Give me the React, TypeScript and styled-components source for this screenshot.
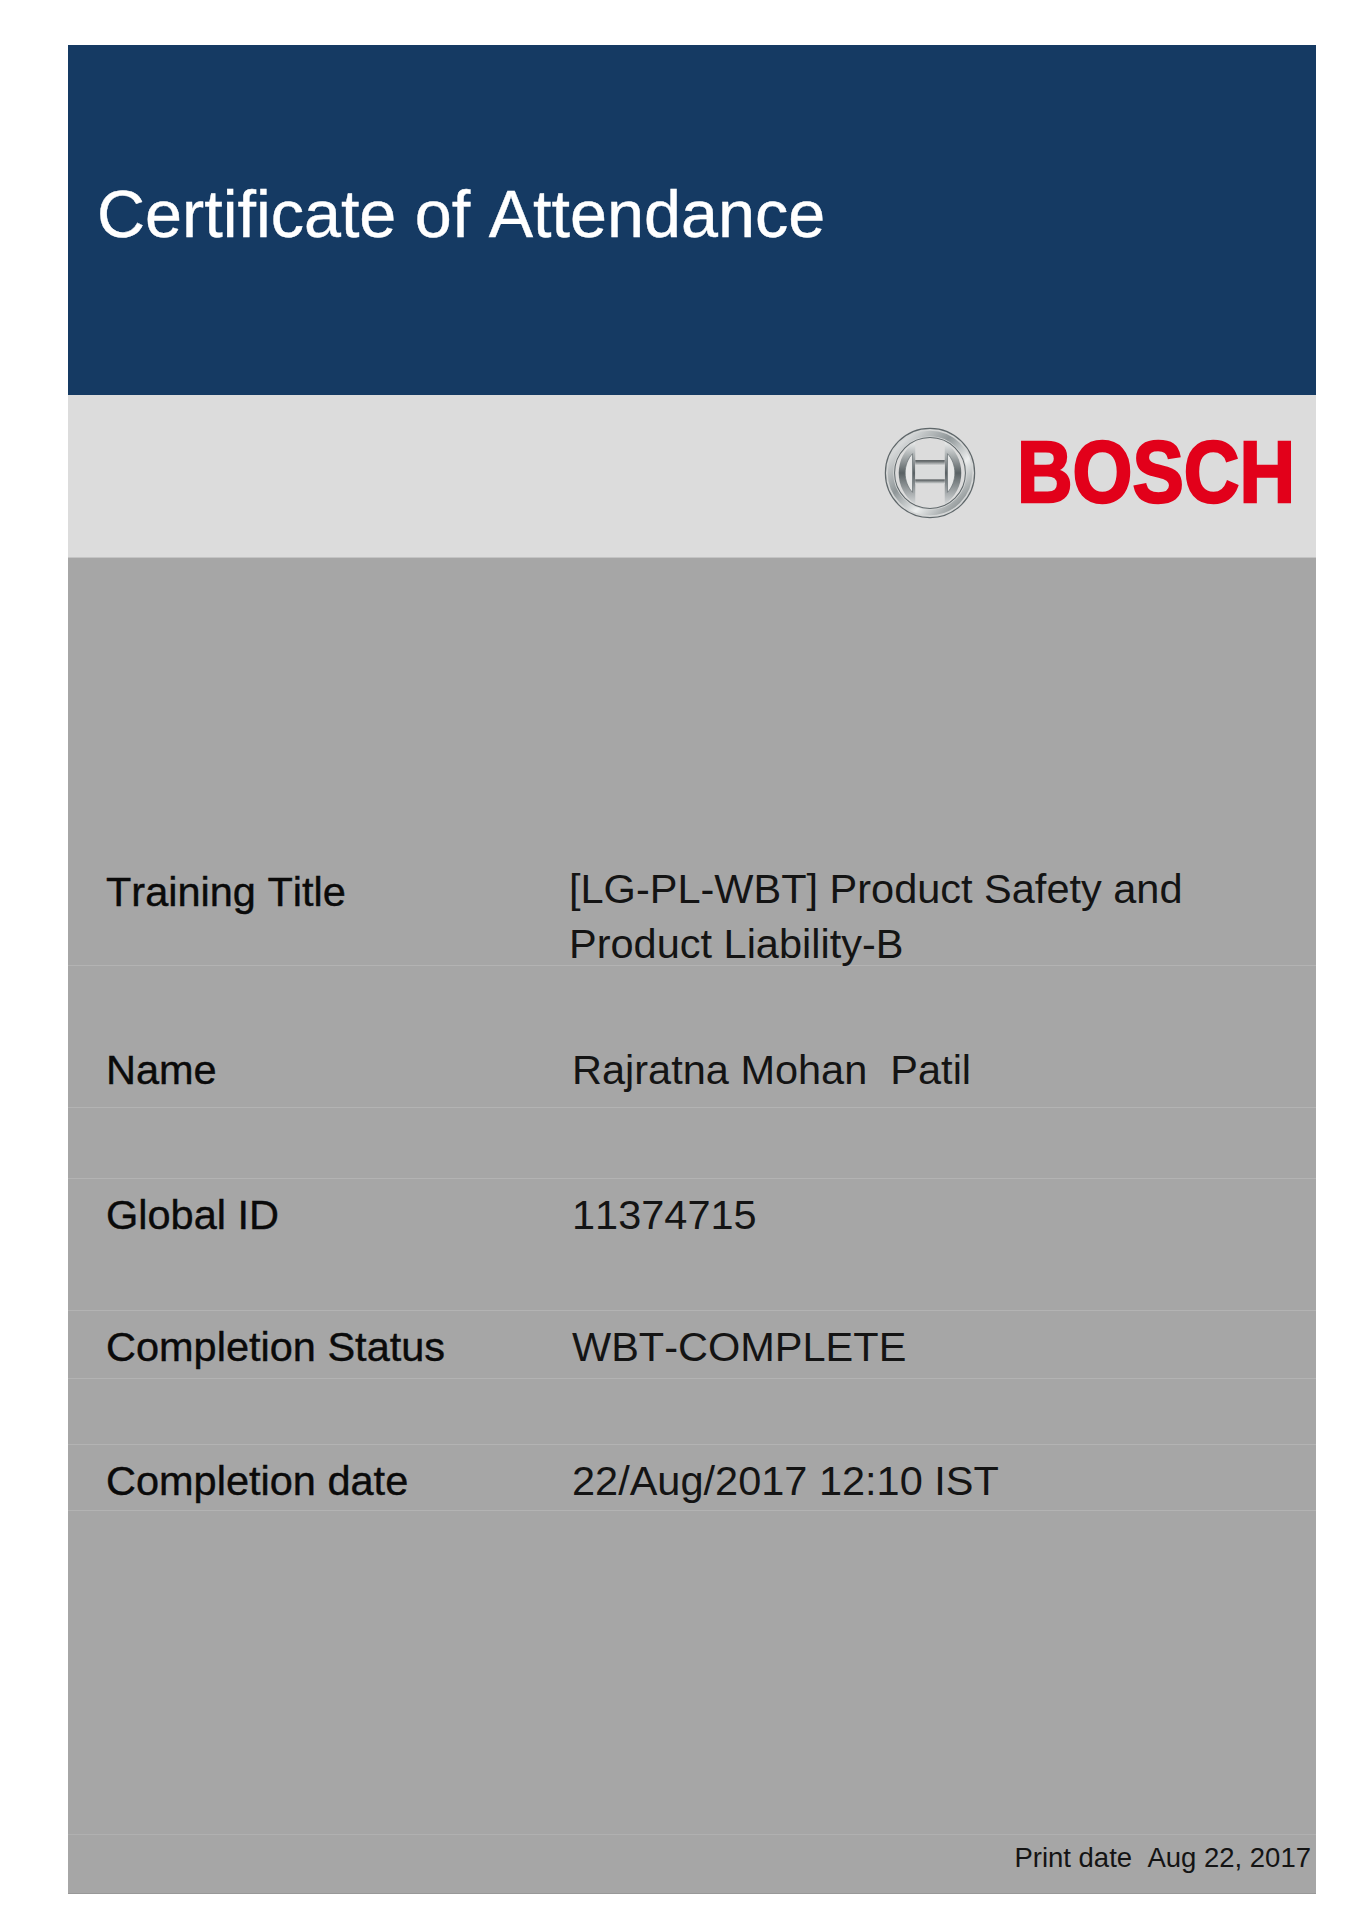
import React from 'react'
import styled, { createGlobalStyle } from 'styled-components'

const GlobalStyle = createGlobalStyle`
  html, body {
    margin: 0;
    padding: 0;
    background: #fff;
    font-family: "Liberation Sans", Arial, sans-serif;
    font-kerning: none;
  }
`

const Page = styled.div`
  width: 1364px;
  height: 1929px;
  padding: 45px 48px 0 68px;
  box-sizing: border-box;
`

const Banner = styled.header`
  height: 350px;
  background: #153a63;
  padding: 132px 0 0 29px;
  box-sizing: border-box;
`

const Heading = styled.h1`
  margin: 0;
  font-size: 66.5px;
  line-height: 74px;
  font-weight: 400;
  color: #fff;
  -webkit-text-stroke: 0.4px #fff;
`

const LogoBar = styled.div`
  height: 163px;
  background: #dcdcdc;
  border-bottom: 1px solid #c4c4c4;
  box-sizing: border-box;
  display: flex;
  align-items: flex-start;
  padding: 31px 25px 0 0;
  justify-content: flex-end;
`

const Armature = styled.svg`
  width: 92px;
  height: 94px;
  margin-right: 41px;
  flex: none;
`

const Wordmark = styled.div`
  width: 274px;
  height: 92px;
  font-weight: 700;
  font-size: 87px;
  line-height: 92px;
  color: #e2001a;
  -webkit-text-stroke: 2.5px #e2001a;
  white-space: nowrap;
  transform: scaleX(0.885);
  transform-origin: left center;
`

const Body = styled.main`
  height: 1336px;
  background: #a6a6a6;
  box-sizing: border-box;
  padding-top: 290px;
  border-bottom: 1px solid #989898;
`

const Row = styled.div<{ $height: number; $pad: number; $gap?: number; $top?: boolean }>`
  display: grid;
  grid-template-columns: 466px 1fr;
  align-items: start;
  height: ${({ $height }) => $height}px;
  margin-top: ${({ $gap }) => $gap ?? 0}px;
  padding: ${({ $pad }) => $pad}px 0 0 38px;
  box-sizing: border-box;
  border-bottom: 1px solid #b3b3b3;
  border-top: ${({ $top }) => ($top ? '1px solid #b3b3b3' : 'none')};
`

const Label = styled.div<{ $drop?: number }>`
  font-size: 41.5px;
  line-height: 55px;
  color: #0a0a0a;
  margin-top: ${({ $drop }) => $drop ?? 0}px;
  -webkit-text-stroke: 0.4px #0a0a0a;
`

const Value = styled.div<{ $shift?: number }>`
  font-size: 41.5px;
  line-height: 55px;
  color: #141414;
  margin-left: ${({ $shift }) => $shift ?? 0}px;
`

const PrintRow = styled.div`
  margin-top: 323px;
  height: 60px;
  border-top: 1px solid #b0b0b0;
  box-sizing: border-box;
  padding: 3px 5px 0 0;
  text-align: right;
  font-size: 27.5px;
  line-height: 40px;
  color: #141414;
`

function BoschArmature() {
  return (
    <Armature viewBox="0 0 100 100">
      <defs>
        <linearGradient id="ring" x1="0" y1="0" x2="1" y2="1">
          <stop offset="0" stopColor="#fafafa" />
          <stop offset="0.4" stopColor="#8f9698" />
          <stop offset="0.65" stopColor="#eceeee" />
          <stop offset="1" stopColor="#687072" />
        </linearGradient>
        <linearGradient id="arc" x1="0" y1="0" x2="0" y2="1">
          <stop offset="0" stopColor="#eceeee" />
          <stop offset="0.5" stopColor="#596164" />
          <stop offset="1" stopColor="#d4d7d8" />
        </linearGradient>
        <linearGradient id="bar" x1="0" y1="0" x2="0" y2="1">
          <stop offset="0" stopColor="#474e50" />
          <stop offset="1" stopColor="#e4e6e6" />
        </linearGradient>
      </defs>
      <circle cx="50" cy="50" r="48.5" fill="#d4d6d6" stroke="#5f676a" strokeWidth="1.3" />
      <circle cx="50" cy="50" r="43" fill="none" stroke="url(#ring)" strokeWidth="6" />
      <circle cx="50" cy="50" r="38.5" fill="#dcdcdc" stroke="#5f676a" strokeWidth="1.1" />
      <path d="M34 16 C22 24 16 37 16 50 C16 63 22 76 34 84 Z" fill="url(#arc)" />
      <path d="M66 16 C78 24 84 37 84 50 C84 63 78 76 66 84 Z" fill="url(#arc)" />
      <path d="M31 29 C26 34 23 42 23 50 C23 58 26 66 31 71 Z" fill="#e6e7e7" stroke="#6b7275" strokeWidth="0.8" />
      <path d="M69 29 C74 34 77 42 77 50 C77 58 74 66 69 71 Z" fill="#e6e7e7" stroke="#6b7275" strokeWidth="0.8" />
      <rect x="34" y="36" width="32" height="6" fill="url(#bar)" />
      <rect x="34" y="42" width="32" height="15" fill="#dadcdc" />
      <rect x="34" y="57" width="32" height="5" fill="url(#bar)" />
    </Armature>
  )
}

export default function App() {
  return (
    <Page>
      <GlobalStyle />
      <Banner>
        <Heading>Certificate of Attendance</Heading>
      </Banner>
      <LogoBar>
        <BoschArmature />
        <Wordmark>BOSCH</Wordmark>
      </LogoBar>
      <Body>
        <Row $height={118} $pad={13}>
          <Label $drop={3}>Training Title</Label>
          <Value $shift={-3}>
            [LG-PL-WBT] Product Safety and
            <br />
            Product Liability-B
          </Value>
        </Row>
        <Row $height={142} $pad={76}>
          <Label>Name</Label>
          <Value>Rajratna Mohan&nbsp; Patil</Value>
        </Row>
        <Row $height={133} $pad={8} $gap={70} $top>
          <Label>Global ID</Label>
          <Value>11374715</Value>
        </Row>
        <Row $height={68} $pad={8}>
          <Label>Completion Status</Label>
          <Value>WBT-COMPLETE</Value>
        </Row>
        <Row $height={67} $pad={8} $gap={65} $top>
          <Label>Completion date</Label>
          <Value>22/Aug/2017 12:10 IST</Value>
        </Row>
        <PrintRow>Print date&nbsp; Aug 22, 2017</PrintRow>
      </Body>
    </Page>
  )
}
